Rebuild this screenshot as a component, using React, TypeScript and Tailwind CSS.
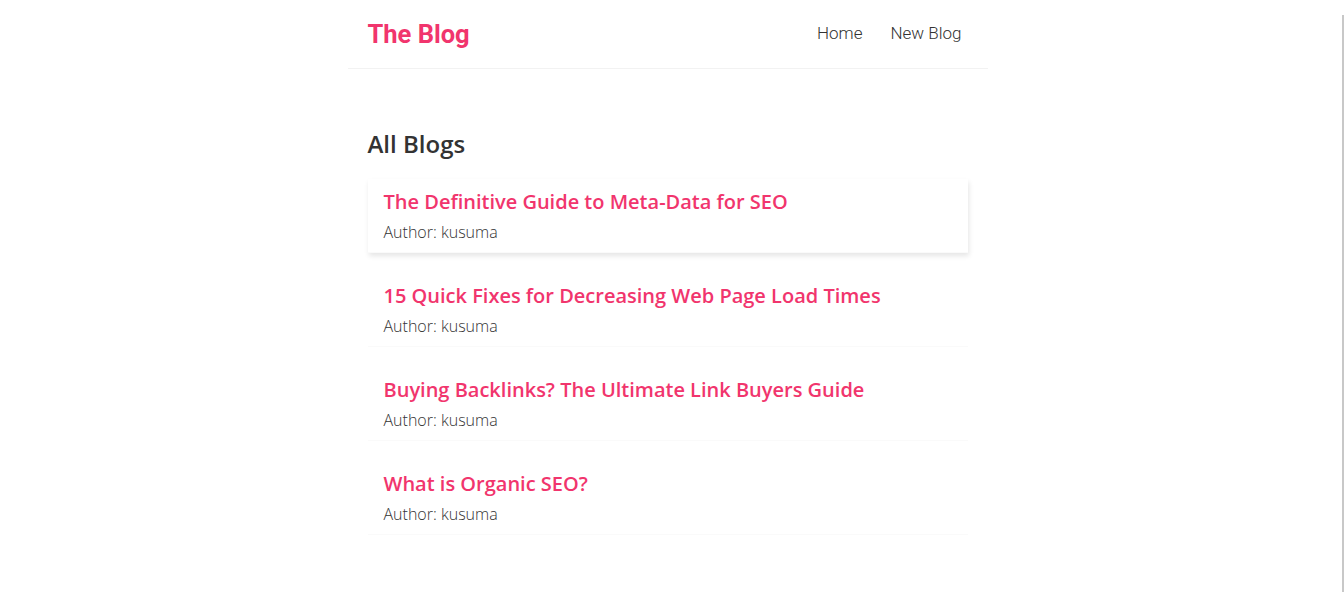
const blogs = [
  { id: 1, title: "The Definitive Guide to Meta-Data for SEO", author: "kusuma" },
  { id: 2, title: "15 Quick Fixes for Decreasing Web Page Load Times", author: "kusuma" },
  { id: 3, title: "Buying Backlinks? The Ultimate Link Buyers Guide", author: "kusuma" },
  { id: 4, title: "What is Organic SEO?", author: "kusuma" },
];

function Navbar() {
  return (
    <nav className="mx-auto flex h-[69px] w-[640px] items-center justify-between border-b border-[#f2f2f2] px-5">
      <h1 className="font-['Roboto',sans-serif] text-[25.5px] font-bold text-[#f1356d]">The Blog</h1>
      <div className="flex font-['Roboto',sans-serif] text-[17px] font-light text-[#333]">
        <a href="/" className="ml-4 px-1.5">Home</a>
        <a href="/create" className="ml-4 px-1.5">New Blog</a>
      </div>
    </nav>
  );
}

export default function App() {
  return (
    <div className="flex h-[592px] w-full overflow-hidden bg-white font-['Open_Sans',sans-serif] text-[#333]">
      <main className="flex-1">
        <Navbar />

        {/* Blog list */}
        <div className="mx-auto mt-10 w-[640px] p-5">
          <h2 className="text-2xl font-semibold leading-[30px]">All Blogs</h2>
          {blogs.map((blog, i) => (
            <div
              key={blog.id}
              className={
                "my-5 border-b border-[#fafafa] px-4 py-2.5 " +
                (i === 0 ? "shadow-[1px_3px_5px_rgba(0,0,0,0.1)]" : "")
              }
            >
              <h2 className="mb-2 text-xl font-semibold leading-[25px] text-[#f1356d]">{blog.title}</h2>
              <p className="text-base font-light leading-5">Author: {blog.author}</p>
            </div>
          ))}
        </div>
      </main>

      {/* page scrollbar edge */}
      <div className="flex w-[9px] justify-end pt-[15px]">
        <div className="h-full w-[2px] bg-[#c8c8c8]"></div>
      </div>
    </div>
  );
}
